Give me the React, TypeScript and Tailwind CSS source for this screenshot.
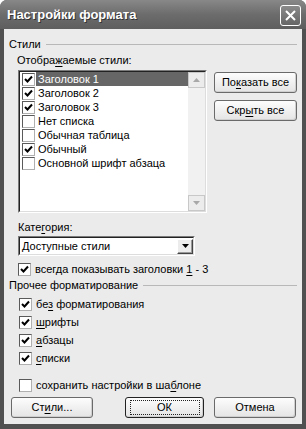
import type { ReactNode } from "react";

const font = { fontFamily: '"Liberation Sans", Arial, sans-serif' };

function Check({ checked }: { checked: boolean }) {
  return (
    <span className="flex h-[13px] w-[13px] shrink-0 items-center justify-center border border-t-[#5a5a5a] border-l-[#5a5a5a] border-r-[#b0b0b0] border-b-[#b0b0b0] bg-white">
      {checked && (
        <svg width="9" height="9" viewBox="0 0 9 9">
          <path d="M1 4 L3.5 6.5 L8 1.5" fill="none" stroke="#000" strokeWidth="2" />
        </svg>
      )}
    </span>
  );
}

function U({ children }: { children: ReactNode }) {
  return <span className="underline underline-offset-2">{children}</span>;
}

function Section({ title, lineFrom }: { title: string; lineFrom?: number }) {
  return (
    <div className="flex h-[13px] items-center gap-[5px] pl-[5px] pr-[5px]">
      <span className="leading-[13px]">{title}</span>
      <div className="h-px flex-1 bg-[#b8b8b8]" />
    </div>
  );
}

function Btn({ children, w, def }: { children: ReactNode; w: string; def?: boolean }) {
  return (
    <div
      className={`flex h-[21px] ${w} items-center justify-center rounded-[3px] border ${
        def ? "border-[#222]" : "border-[#6a6a6a]"
      } bg-gradient-to-b from-[#fdfdfd] to-[#e4e4e4] shadow-[inset_-1px_-1px_0_#cfcfcf]`}
    >
      {def ? (
        <span className="flex h-[15px] w-[70px] items-center justify-center border border-dotted border-[#222]">
          {children}
        </span>
      ) : (
        children
      )}
    </div>
  );
}

const styles: [string, boolean][] = [
  ["Заголовок 1", true],
  ["Заголовок 2", true],
  ["Заголовок 3", true],
  ["Нет списка", false],
  ["Обычная таблица", false],
  ["Обычный", true],
  ["Основной шрифт абзаца", false],
];

function Arrow({ up }: { up?: boolean }) {
  return (
    <svg width="7" height="4" viewBox="0 0 7 4">
      <path d={up ? "M0 4 L3.5 0 L7 4 Z" : "M0 0 L7 0 L3.5 4 Z"} fill="#a8a8a8" />
    </svg>
  );
}

export default function App() {
  return (
    <div
      className="flex h-[429px] w-[306px] flex-col overflow-hidden rounded-t-[7px] bg-[#505050] text-[11px] text-black"
      style={font}
    >
      {/* title bar */}
      <div className="flex h-[29px] shrink-0 items-center justify-between bg-gradient-to-b from-[#888] via-[#6c6c6c] to-[#5e5e5e] pl-[7px] pr-[5px]">
        <span className="text-[13px] font-bold text-white [text-shadow:1px_1px_0_#333]">
          Настройки формата
        </span>
        <div className="mt-[2px] flex h-[21px] w-[21px] items-center justify-center rounded-[3px] border border-white bg-gradient-to-b from-[#8a8a8a] to-[#666]">
          <svg width="11" height="11" viewBox="0 0 11 11">
            <path d="M1 1 L10 10 M10 1 L1 10" stroke="#fff" strokeWidth="2" />
          </svg>
        </div>
      </div>

      {/* body */}
      <div className="mx-[4px] flex flex-1 flex-col bg-[#ebebeb] pb-[6px]">
        <div className="mt-[9px]">
          <Section title="Стили" />
        </div>
        <div className="ml-[13px] mt-[3px] leading-[13px]">
          Отобра<U>ж</U>аемые стили:
        </div>

        <div className="mt-[3px] flex">
          <div className="ml-[14px] flex h-[143px] w-[189px] border border-t-[#7a7a7a] border-l-[#7a7a7a] border-r-white border-b-white">
            <div className="flex flex-1 border border-t-[#222] border-l-[#222] border-r-[#ddd] border-b-[#ddd] bg-white">
              <div className="flex flex-1 flex-col pl-[1px]">
                {styles.map(([name, on], i) => (
                  <div key={name} className="flex h-[14px] items-center">
                    <div className="px-[1px]">
                      <Check checked={on} />
                    </div>
                    <div
                      className={`flex h-[14px] flex-1 items-center pl-[2px] ${
                        i === 0 ? "bg-[#666] text-white" : ""
                      }`}
                    >
                      {name}
                    </div>
                  </div>
                ))}
              </div>
              <div className="flex w-[17px] flex-col justify-between bg-[#f1f1f1]">
                <div className="flex h-[16px] items-center justify-center border border-[#c8c8c8] bg-[#ececec]">
                  <Arrow up />
                </div>
                <div className="flex h-[16px] items-center justify-center border border-[#c8c8c8] bg-[#ececec]">
                  <Arrow />
                </div>
              </div>
            </div>
          </div>
          <div className="ml-[7px] mt-[2px] flex flex-col gap-[7px]">
            <Btn w="w-[83px]">
              <span>
                По<U>к</U>азать все
              </span>
            </Btn>
            <Btn w="w-[83px]">
              <span>
                Скр<U>ы</U>ть все
              </span>
            </Btn>
          </div>
        </div>

        <div className="ml-[14px] mt-[8px] leading-[13px]">
          Кате<U>г</U>ория:
        </div>
        <div className="ml-[14px] mt-[2px] flex h-[20px] w-[177px] items-center border border-t-[#7a7a7a] border-l-[#7a7a7a] border-r-white border-b-white">
          <div className="flex h-full flex-1 items-center border border-t-[#222] border-l-[#222] border-r-[#ddd] border-b-[#ddd] bg-white pl-[2px]">
            <span className="flex-1">Доступные стили</span>
            <div className="flex h-[15px] w-[16px] items-center justify-center border border-t-white border-l-white border-r-[#444] border-b-[#444] bg-[#ececec] shadow-[inset_-1px_-1px_0_#999]">
              <svg width="7" height="4" viewBox="0 0 7 4">
                <path d="M0 0 L7 0 L3.5 4 Z" fill="#000" />
              </svg>
            </div>
          </div>
        </div>

        <div className="ml-[14px] mt-[7px] flex items-center gap-[4px] leading-[13px]">
          <Check checked />
          <span>
            всегда показывать заголовки <U>1</U> - 3
          </span>
        </div>

        <div className="mt-[3px]">
          <Section title="Прочее форматирование" />
        </div>

        <div className="ml-[15px] mt-[6px] flex flex-col gap-[5px] leading-[13px]">
          <div className="flex items-center gap-[4px]">
            <Check checked />
            <span>
              бе<U>з</U> форматирования
            </span>
          </div>
          <div className="flex items-center gap-[4px]">
            <Check checked />
            <span>
              <U>ш</U>рифты
            </span>
          </div>
          <div className="flex items-center gap-[4px]">
            <Check checked />
            <span>
              <U>а</U>бзацы
            </span>
          </div>
          <div className="flex items-center gap-[4px]">
            <Check checked />
            <span>
              <U>с</U>писки
            </span>
          </div>
        </div>

        <div className="ml-[15px] mt-[14px] flex items-center gap-[4px] leading-[13px]">
          <Check checked={false} />
          <span>
            сохранить настройки в ша<U>б</U>лоне
          </span>
        </div>

        <div className="mt-[5px] flex items-center pl-[7px]">
          <Btn w="w-[82px]">
            <span>
              Ст<U>и</U>ли...
            </span>
          </Btn>
          <div className="ml-[32px]">
            <Btn w="w-[79px]" def>
              ОК
            </Btn>
          </div>
          <div className="ml-[10px]">
            <Btn w="w-[82px]">Отмена</Btn>
          </div>
        </div>
      </div>
      <div className="h-[5px] shrink-0" />
    </div>
  );
}
